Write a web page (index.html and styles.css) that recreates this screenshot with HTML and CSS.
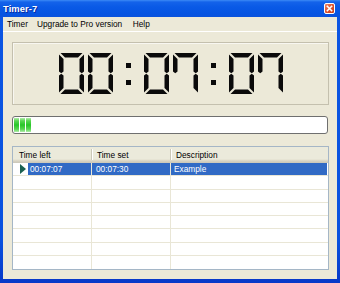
FILE: index.html
```html
<!DOCTYPE html>
<html>
<head>
<meta charset="utf-8">
<link rel="stylesheet" href="styles.css">
</head>
<body>
<svg class="defs" xmlns="http://www.w3.org/2000/svg">
  <symbol id="sa" viewBox="0 0 25 41"><polygon points="1.5,0 23.5,0 19,4.5 6,4.5"/></symbol>
  <symbol id="sb" viewBox="0 0 25 41"><polygon points="20.5,6 25,1.5 25,18.5 22.75,20.25 20.5,18.5"/></symbol>
  <symbol id="sc" viewBox="0 0 25 41"><polygon points="20.5,35 25,39.5 25,22.5 22.75,20.75 20.5,22.5"/></symbol>
  <symbol id="sd" viewBox="0 0 25 41"><polygon points="1.5,41 23.5,41 19,36.5 6,36.5"/></symbol>
  <symbol id="se" viewBox="0 0 25 41"><polygon points="4.5,35 0,39.5 0,22.5 2.25,20.75 4.5,22.5"/></symbol>
  <symbol id="sf" viewBox="0 0 25 41"><polygon points="4.5,6 0,1.5 0,18.5 2.25,20.25 4.5,18.5"/></symbol>
  <symbol id="d0" viewBox="0 0 25 41">
    <use href="#sa"/><use href="#sb"/><use href="#sc"/><use href="#sd"/><use href="#se"/><use href="#sf"/>
  </symbol>
  <symbol id="d7" viewBox="0 0 25 41">
    <use href="#sa"/><use href="#sb"/><use href="#sc"/><use href="#sf"/>
  </symbol>
</svg>
<div class="window">
  <div class="titlebar">
    <span class="title">Timer-7</span>
    <span class="close">
      <svg width="7" height="7" viewBox="0 0 7 7"><path d="M0.8 0.8 L6.2 6.2 M6.2 0.8 L0.8 6.2" stroke="#fff" stroke-width="1.6"/></svg>
    </span>
  </div>
  <div class="frame">
    <div class="menubar">
      <span>Timer</span>
      <span>Upgrade to Pro version</span>
      <span class="help">Help</span>
    </div>
    <div class="content">
      <div class="display">
        <div class="pair">
          <svg class="digit" viewBox="0 0 25 41"><use href="#d0"/></svg>
          <svg class="digit" viewBox="0 0 25 41"><use href="#d0"/></svg>
        </div>
        <div class="colon"><i></i><i></i></div>
        <div class="pair">
          <svg class="digit" viewBox="0 0 25 41"><use href="#d0"/></svg>
          <svg class="digit" viewBox="0 0 25 41"><use href="#d7"/></svg>
        </div>
        <div class="colon"><i></i><i></i></div>
        <div class="pair">
          <svg class="digit" viewBox="0 0 25 41"><use href="#d0"/></svg>
          <svg class="digit" viewBox="0 0 25 41"><use href="#d7"/></svg>
        </div>
      </div>
      <div class="progress"><i></i><i></i><i></i></div>
      <div class="list">
        <div class="header">
          <div class="hcell">Time left</div>
          <div class="hcell">Time set</div>
          <div class="hcell last">Description</div>
        </div>
        <div class="rows">
          <div class="row">
            <div class="cell c1"><span class="marker"><span class="arrow"></span></span><span class="sel">00:07:07</span></div>
            <div class="cell"><span class="sel s2">00:07:30</span></div>
            <div class="cell last"><span class="sel s3">Example</span></div>
          </div>
          <div class="row"><div class="cell"></div><div class="cell"></div><div class="cell last"></div></div>
          <div class="row"><div class="cell"></div><div class="cell"></div><div class="cell last"></div></div>
          <div class="row"><div class="cell"></div><div class="cell"></div><div class="cell last"></div></div>
          <div class="row"><div class="cell"></div><div class="cell"></div><div class="cell last"></div></div>
          <div class="row"><div class="cell"></div><div class="cell"></div><div class="cell last"></div></div>
          <div class="row"><div class="cell"></div><div class="cell"></div><div class="cell last"></div></div>
          <div class="row"><div class="cell"></div><div class="cell"></div><div class="cell last"></div></div>
        </div>
      </div>
    </div>
  </div>
</div>
</body>
</html>
```

FILE: styles.css
```css
html, body {
  margin: 0;
  padding: 0;
}
body {
  font-family: "Liberation Sans", Arial, sans-serif;
  font-size: 8.3px;
  color: #000;
  background: #0b55e3;
}
.defs {
  display: none;
}
.window {
  width: 340px;
  height: 283px;
  display: flex;
  flex-direction: column;
  background: linear-gradient(#0b55e3 0, #0a52df 85%, #0838c8 100%);
}
.titlebar {
  height: 17px;
  flex: none;
  display: flex;
  align-items: center;
  justify-content: space-between;
  padding: 0 5px 0 3px;
  background: linear-gradient(#3c8af6 0, #1463ea 2px, #0a5ae6 40%, #0654e2 80%, #0a52dc 100%);
}
.title {
  color: #fff;
  font-weight: bold;
  font-size: 9.4px;
  text-shadow: 1px 1px 0 #0a2a9c;
  letter-spacing: 0.1px;
}
.close {
  width: 9px;
  height: 9px;
  border: 1px solid #fff;
  border-radius: 2px;
  background: linear-gradient(135deg, #f08a6a 0, #e05530 45%, #c83c1a 100%);
  display: flex;
  align-items: center;
  justify-content: center;
}
.close svg {
  display: block;
}
.frame {
  flex: 1;
  margin: 0 3px 4px;
  background: #ece9d8;
  display: flex;
  flex-direction: column;
}
.menubar {
  height: 14px;
  flex: none;
  display: flex;
  align-items: center;
  gap: 9px;
  padding-left: 4px;
  border-bottom: 1px solid #fff;
}
.menubar .help {
  margin-left: 1.5px;
}
.content {
  padding: 10px 8px 0 9px;
  display: flex;
  flex-direction: column;
}
.display {
  height: 63px;
  box-sizing: border-box;
  border: 1px solid #c4c0ae;
  box-shadow: inset 1px 1px 0 #f8f7f1;
  display: flex;
  align-items: center;
  justify-content: center;
  gap: 13px;
  padding-bottom: 1px;
}
.pair {
  display: flex;
  gap: 4px;
}
.digit {
  display: block;
  width: 25px;
  height: 41px;
  fill: #0a0a0a;
}
.colon {
  width: 5px;
  height: 41px;
  display: flex;
  flex-direction: column;
  align-items: center;
  padding-top: 10px;
  box-sizing: border-box;
  gap: 12px;
}
.colon i {
  display: block;
  width: 5px;
  height: 5px;
  background: #0a0a0a;
}
.progress {
  margin-top: 11px;
  margin-right: 1px;
  height: 18px;
  box-sizing: border-box;
  border: 1px solid #6f6f6f;
  border-radius: 3px;
  background: #fff;
  padding: 1px;
  display: flex;
  gap: 1px;
}
.progress i {
  display: block;
  width: 5px;
  background: linear-gradient(#b2ecab 0, #5ad652 20%, #28c628 50%, #5ad652 80%, #b2ecab 100%);
}
.list {
  margin-top: 12px;
  height: 124px;
  box-sizing: border-box;
  border: 1px solid #a5b6c6;
  background: #fff;
  display: flex;
  flex-direction: column;
}
.header {
  height: 16px;
  flex: none;
  display: grid;
  grid-template-columns: 79px 79px 1fr;
  background: linear-gradient(#ebeadb 0, #ebeadb 75%, #e2decd 81%, #d6d2c2 88%, #cbc7b8 100%);
}
.hcell {
  display: flex;
  align-items: center;
  padding-left: 5px;
  padding-bottom: 1px;
  position: relative;
}
.hcell:first-child {
  padding-left: 6px;
}
.hcell::after {
  content: "";
  position: absolute;
  right: 0;
  top: 2px;
  bottom: 3px;
  width: 1px;
  background: #cbc8b8;
  box-shadow: 1px 0 0 #fff;
}
.hcell.last::after {
  display: none;
}
.rows {
  flex: 1;
  display: grid;
  grid-template-rows: repeat(8, 1fr);
}
.row {
  display: grid;
  grid-template-columns: 79px 79px 1fr;
  border-bottom: 1px solid #e9e6d6;
  min-height: 0;
}
.row:last-child {
  border-bottom: none;
}
.cell {
  border-right: 1px solid #e9e6d6;
  display: flex;
  min-height: 0;
}
.cell.last {
  border-right: none;
}
.marker {
  width: 15px;
  flex: none;
  display: flex;
  align-items: center;
  padding-left: 7px;
  box-sizing: border-box;
}
.arrow {
  width: 0;
  height: 0;
  border-left: 6px solid #1b6151;
  border-top: 5px solid transparent;
  border-bottom: 5px solid transparent;
}
.sel {
  flex: 1;
  background: #316ac5;
  color: #fff;
  display: flex;
  align-items: center;
  padding-left: 2px;
}
.sel.s2 {
  padding-left: 4px;
}
.sel.s3 {
  padding-left: 3px;
  margin-right: 1px;
}
```
